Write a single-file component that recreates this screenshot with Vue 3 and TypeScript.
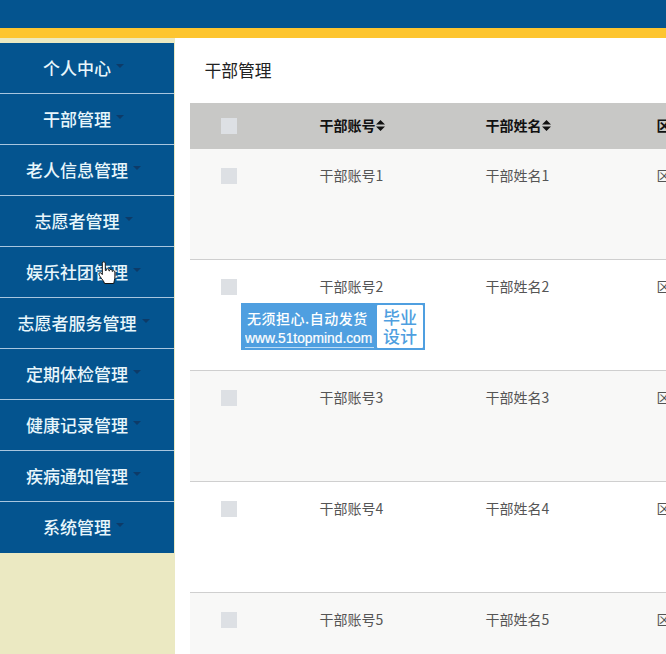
<script setup lang="ts">
const menus: string[] = ['个人中心', '干部管理', '老人信息管理', '志愿者管理', '娱乐社团管理', '志愿者服务管理', '定期体检管理', '健康记录管理', '疾病通知管理', '系统管理']
const rows: number[] = [1, 2, 3, 4, 5]
</script>

<template>
  <div class="page">
    <header class="top"></header>
    <div class="stripe"></div>
    <div class="body">
      <aside class="side">
        <nav class="menu">
          <a v-for="m in menus" :key="m" class="item">{{ m }}<i class="caret"></i></a>
        </nav>
      </aside>
      <main class="main">
        <h1 class="title">干部管理</h1>
        <div class="table">
          <div class="row head">
            <div class="cell"><span class="check"></span></div>
            <div class="cell">干部账号<svg class="sort" viewBox="0 0 9 11"><path d="M4.5 0 9 4.6H0zM0 6.4h9L4.5 11z" /></svg></div>
            <div class="cell">干部姓名<svg class="sort" viewBox="0 0 9 11"><path d="M4.5 0 9 4.6H0zM0 6.4h9L4.5 11z" /></svg></div>
            <div class="cell">区域</div>
          </div>
          <div v-for="r in rows" :key="r" class="row data">
            <div class="cell"><span class="check"></span></div>
            <div class="cell">干部账号{{ r }}</div>
            <div class="cell">干部姓名{{ r }}</div>
            <div class="cell">区域{{ r }}</div>
          </div>
        </div>
      </main>
    </div>
    <div class="mark">
      <div class="mark-left">
        <div class="mark-cn">无须担心.自动发货</div>
        <div class="mark-url">www.51topmind.com</div>
      </div>
      <div class="mark-box">毕业<br />设计</div>
    </div>
    <svg class="hand" viewBox="0 0 18 25">
      <path d="M4.300 2.200c0-1.900 3-1.900 3 0v7.300c.3-.1.700-.1 1-.1V8.800c0-1.400 2.600-1.400 2.600 0v1c.2 0 .5 0 .7.100v-.5c0-1.300 2.500-1.300 2.500 0v.9c.1 0 .3.100.4.100.1-1 2.400-.9 2.400.5v5.100c0 2.700-.9 3.900-1.100 6.500H6.500c-.4-2.200-2.600-4.200-4.200-6.700-1-1.600-1.800-3-1.100-3.700.9-.9 2.200-.1 3.100 1.500z" fill="#fff" stroke="#111" stroke-width="1" stroke-linejoin="round" />
    </svg>
  </div>
</template>

<style>
html, body { margin: 0; overflow: hidden; }
</style>

<style scoped>
.page {
  position: relative;
  width: 666px;
  height: 654px;
  overflow: hidden;
  background: #fff;
  font-family: "Noto Sans CJK SC", "Liberation Sans", sans-serif;
}
.top { height: 28px; background: #04548f; }
.stripe { height: 10px; background: #fdc52f; }
.body { display: flex; height: 616px; }
.side {
  flex: 0 0 175px;
  box-sizing: border-box;
  padding-top: 5px;
  background: #ebe9c2;
}
.menu { display: flex; flex-direction: column; }
.item {
  box-sizing: border-box;
  display: flex;
  align-items: center;
  justify-content: center;
  width: 174px;
  height: 51px;
  padding-bottom: 1px;
  border-bottom: 1px solid #a9c6df;
  background: #04548f;
  color: #e8f6fb;
  font-size: 17px;
  font-weight: 500;
  line-height: 24px;
}
.item:last-child { border-bottom-color: #04548f; }
.caret {
  flex: none;
  width: 0;
  height: 0;
  margin: 0 7px 4px 5px;
  border-left: 4px solid transparent;
  border-right: 4px solid transparent;
  border-top: 4px solid #0d3b68;
}
.main { flex: 1; min-width: 0; padding-left: 15px; }
.title {
  margin: 0;
  height: 65px;
  padding: 20px 0 0 14.500px;
  box-sizing: border-box;
  font-size: 16.800px;
  font-weight: 400;
  line-height: 24px;
  color: #222;
}
.row {
  display: grid;
  grid-template-columns: 129.500px 166px 171px 100px;
  width: 567px;
  font-size: 14px;
  line-height: 20px;
}
.cell { white-space: nowrap; display: flex; align-items: flex-start; }
.cell:first-child { padding-left: 31px; }
.head { height: 46px; padding-bottom: 2px; box-sizing: border-box; background: #c8c8c6; color: #111; font-weight: 700; align-items: center; }
.head .cell { align-items: center; }
.head .check { margin-top: 2px; }
.data { height: 111px; padding-top: 16px; box-sizing: border-box; color: #555; border-bottom: 1px solid #cfcfcf; }
.data:nth-child(even) { background: #f8f8f7; }
.data:nth-child(odd) { background: #fff; }
.data .check { margin-top: 3px; }
.check { display: block; width: 16px; height: 16px; background: #dde0e4; }
.sort { width: 9px; height: 11px; margin-left: 0; fill: #111; }
.mark {
  position: absolute;
  left: 241px;
  top: 303px;
  width: 184px;
  height: 47px;
  box-sizing: border-box;
  display: flex;
  background: #4f9fe0;
  color: #fff;
}
.mark-left { width: 136px; flex: none; }
.mark-cn { font-size: 14px; letter-spacing: 0.500px; line-height: 18px; margin: 6px 0 0 6px; font-weight: 500; white-space: nowrap; }
.mark-url {
  font-family: "Liberation Sans", sans-serif;
  font-size: 13.800px;
  line-height: 16px;
  margin: 4px 0 0 4px;
  width: 129px;
  -webkit-text-stroke: 0.200px #fff;
  border-bottom: 1px solid #bcdcf5;
  white-space: nowrap;
  overflow: hidden;
}
.mark-box {
  flex: none;
  width: 46px;
  height: 43px;
  margin-top: 2px;
  background: #fff;
  color: #4f9fe0;
  font-size: 17px;
  font-weight: 500;
  line-height: 19px;
  text-align: center;
  padding-top: 2px;
  box-sizing: border-box;
  border-radius: 1px;
}
.hand { position: absolute; left: 98px; top: 261px; width: 18px; height: 25px; }
</style>
